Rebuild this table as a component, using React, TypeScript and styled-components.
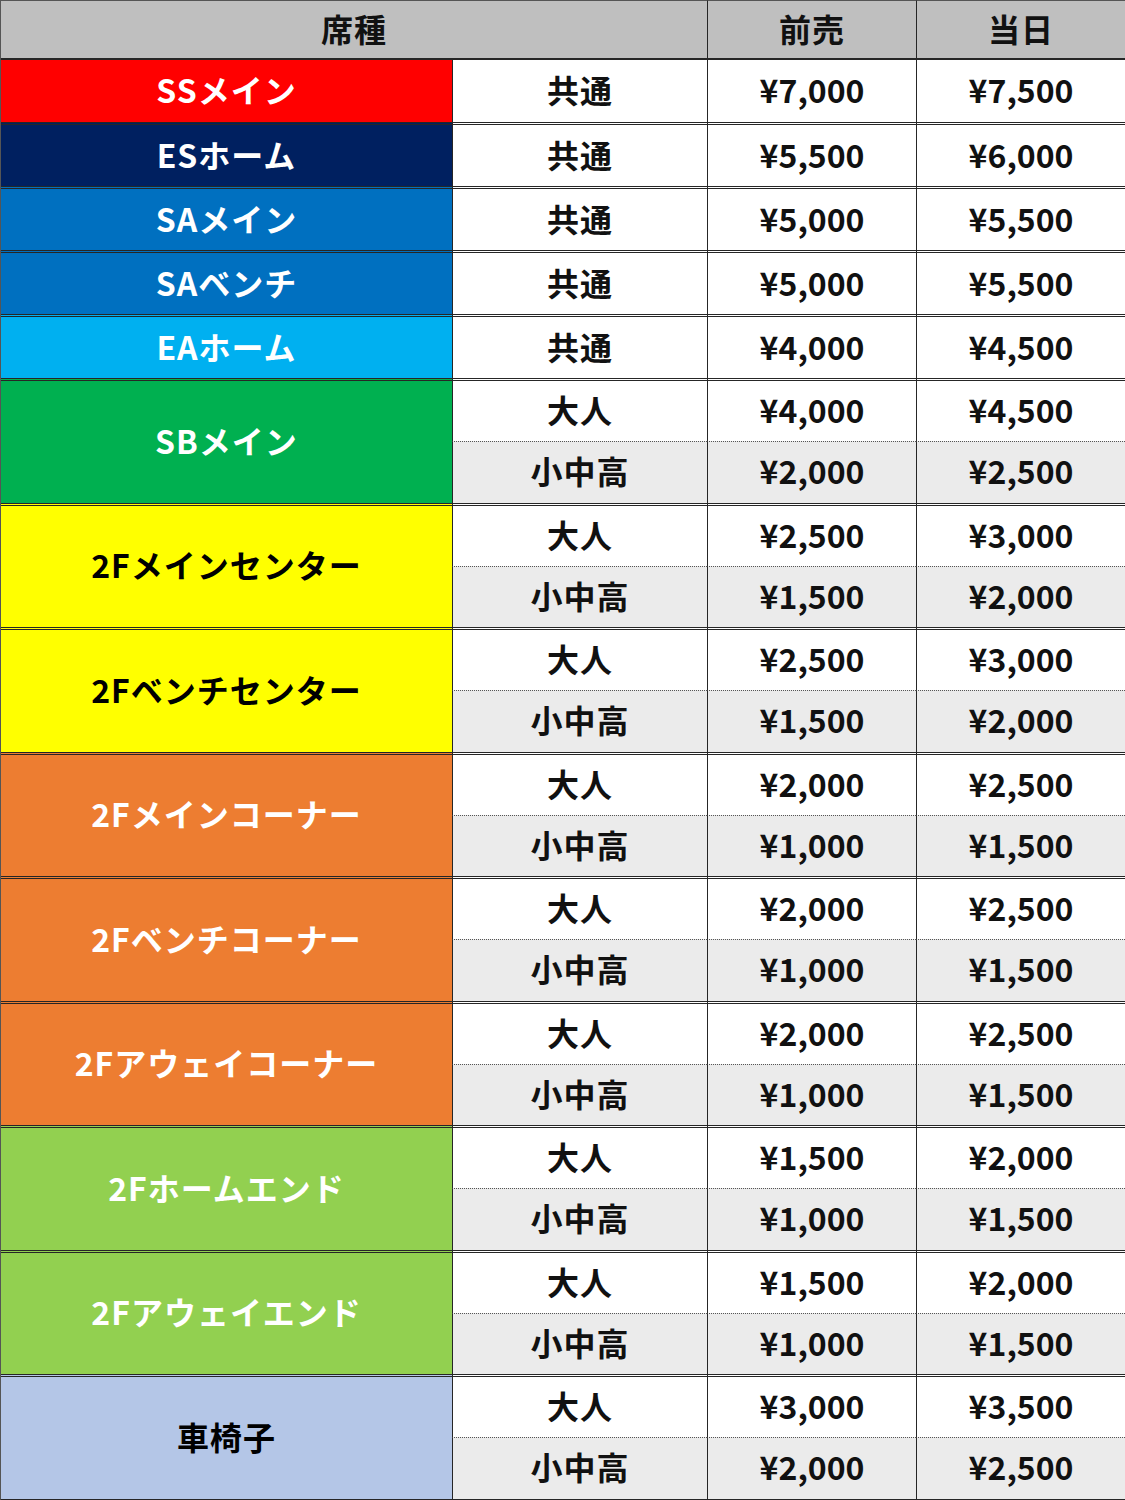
import styled, { createGlobalStyle } from 'styled-components';

const GlobalStyle = createGlobalStyle`
    * { box-sizing: border-box; }
    body {
        margin: 0;
        background: #ffffff;
        font-family: "Noto Sans CJK JP", "Noto Sans", sans-serif;
    }
`;

const LINE = '#262626';

const PriceTable = styled.table`
    width: 1125px;
    table-layout: fixed;
    border-collapse: separate;
    border-spacing: 0;
    border-left: 1px solid #555;
    border-right: 2px solid #444;
    border-bottom: 2px solid ${LINE};
    font-weight: 700;
    font-size: 32px;
    color: #111;
`;

const HeadCell = styled.th<{ $first?: boolean }>`
    height: 60px;
    background: #bfbfbf;
    border-top: 1px solid #555;
    border-bottom: 2px solid ${LINE};
    border-left: ${(p) => (p.$first ? 'none' : `1px solid ${LINE}`)};
    font-weight: 700;
    text-align: center;
    vertical-align: middle;
    letter-spacing: 1px;
    padding: 0 0 4px;
`;

const SeatCell = styled.td<{ $bg: string; $fg: string; $top?: boolean }>`
    background: ${(p) => p.$bg};
    color: ${(p) => p.$fg};
    border-top: ${(p) => (p.$top ? 'none' : `3px double ${LINE}`)};
    text-align: center;
    vertical-align: middle;
    letter-spacing: 1px;
    padding: 0 0 4px;
`;

const Cell = styled.td<{ $shade?: boolean; $dotted?: boolean; $top?: boolean; $h: number; $price?: boolean }>`
    height: ${(p) => p.$h}px;
    background: ${(p) => (p.$shade ? '#ebebeb' : '#ffffff')};
    border-left: 1px solid ${LINE};
    border-top: ${(p) => (p.$top ? 'none' : p.$dotted ? '1px dotted #555' : `3px double ${LINE}`)};
    text-align: center;
    vertical-align: middle;
    letter-spacing: ${(p) => (p.$price ? '0' : '1px')};
    padding: 0 0 4px;
`;

type Seat = {
    name: string;
    bg: string;
    fg: string;
    rows: { kind: string; pre: string; day: string }[];
};

const seats: Seat[] = [
    { name: 'SSメイン', bg: '#ff0000', fg: '#fff', rows: [{ kind: '共通', pre: '7,000', day: '7,500' }] },
    { name: 'ESホーム', bg: '#002060', fg: '#fff', rows: [{ kind: '共通', pre: '5,500', day: '6,000' }] },
    { name: 'SAメイン', bg: '#0070c0', fg: '#fff', rows: [{ kind: '共通', pre: '5,000', day: '5,500' }] },
    { name: 'SAベンチ', bg: '#0070c0', fg: '#fff', rows: [{ kind: '共通', pre: '5,000', day: '5,500' }] },
    { name: 'EAホーム', bg: '#00b0f0', fg: '#fff', rows: [{ kind: '共通', pre: '4,000', day: '4,500' }] },
    {
        name: 'SBメイン', bg: '#00b050', fg: '#fff', rows: [
            { kind: '大人', pre: '4,000', day: '4,500' },
            { kind: '小中高', pre: '2,000', day: '2,500' },
        ],
    },
    {
        name: '2Fメインセンター', bg: '#ffff00', fg: '#000', rows: [
            { kind: '大人', pre: '2,500', day: '3,000' },
            { kind: '小中高', pre: '1,500', day: '2,000' },
        ],
    },
    {
        name: '2Fベンチセンター', bg: '#ffff00', fg: '#000', rows: [
            { kind: '大人', pre: '2,500', day: '3,000' },
            { kind: '小中高', pre: '1,500', day: '2,000' },
        ],
    },
    {
        name: '2Fメインコーナー', bg: '#ed7d31', fg: '#fff', rows: [
            { kind: '大人', pre: '2,000', day: '2,500' },
            { kind: '小中高', pre: '1,000', day: '1,500' },
        ],
    },
    {
        name: '2Fベンチコーナー', bg: '#ed7d31', fg: '#fff', rows: [
            { kind: '大人', pre: '2,000', day: '2,500' },
            { kind: '小中高', pre: '1,000', day: '1,500' },
        ],
    },
    {
        name: '2Fアウェイコーナー', bg: '#ed7d31', fg: '#fff', rows: [
            { kind: '大人', pre: '2,000', day: '2,500' },
            { kind: '小中高', pre: '1,000', day: '1,500' },
        ],
    },
    {
        name: '2Fホームエンド', bg: '#92d050', fg: '#fff', rows: [
            { kind: '大人', pre: '1,500', day: '2,000' },
            { kind: '小中高', pre: '1,000', day: '1,500' },
        ],
    },
    {
        name: '2Fアウェイエンド', bg: '#92d050', fg: '#fff', rows: [
            { kind: '大人', pre: '1,500', day: '2,000' },
            { kind: '小中高', pre: '1,000', day: '1,500' },
        ],
    },
    {
        name: '車椅子', bg: '#b4c6e7', fg: '#000', rows: [
            { kind: '大人', pre: '3,000', day: '3,500' },
            { kind: '小中高', pre: '2,000', day: '2,500' },
        ],
    },
];

const App = () => {
    return (
        <>
            <GlobalStyle />
            <PriceTable>
                <colgroup>
                    <col style={{ width: 451 }} />
                    <col style={{ width: 255 }} />
                    <col style={{ width: 209 }} />
                    <col style={{ width: 209 }} />
                </colgroup>
                <thead>
                    <tr>
                        <HeadCell colSpan={2} $first>席種</HeadCell>
                        <HeadCell>前売</HeadCell>
                        <HeadCell>当日</HeadCell>
                    </tr>
                </thead>
                <tbody>
                    {seats.map((s, si) =>
                        s.rows.map((r, i) => {
                            const single = s.rows.length === 1;
                            const top = si === 0;
                            const h = top ? 62 : single ? 64 : i === 0 ? 63 : 61.5;
                            const shade = !single && i === 1;
                            const dotted = i > 0;
                            return (
                                <tr key={s.name + i}>
                                    {i === 0 && (
                                        <SeatCell rowSpan={s.rows.length} $bg={s.bg} $fg={s.fg} $top={top}>
                                            {s.name}
                                        </SeatCell>
                                    )}
                                    <Cell $h={h} $shade={shade} $dotted={dotted} $top={top}>{r.kind}</Cell>
                                    <Cell $h={h} $shade={shade} $dotted={dotted} $top={top} $price>¥{r.pre}</Cell>
                                    <Cell $h={h} $shade={shade} $dotted={dotted} $top={top} $price>¥{r.day}</Cell>
                                </tr>
                            );
                        })
                    )}
                </tbody>
            </PriceTable>
        </>
    );
};

export default App;
